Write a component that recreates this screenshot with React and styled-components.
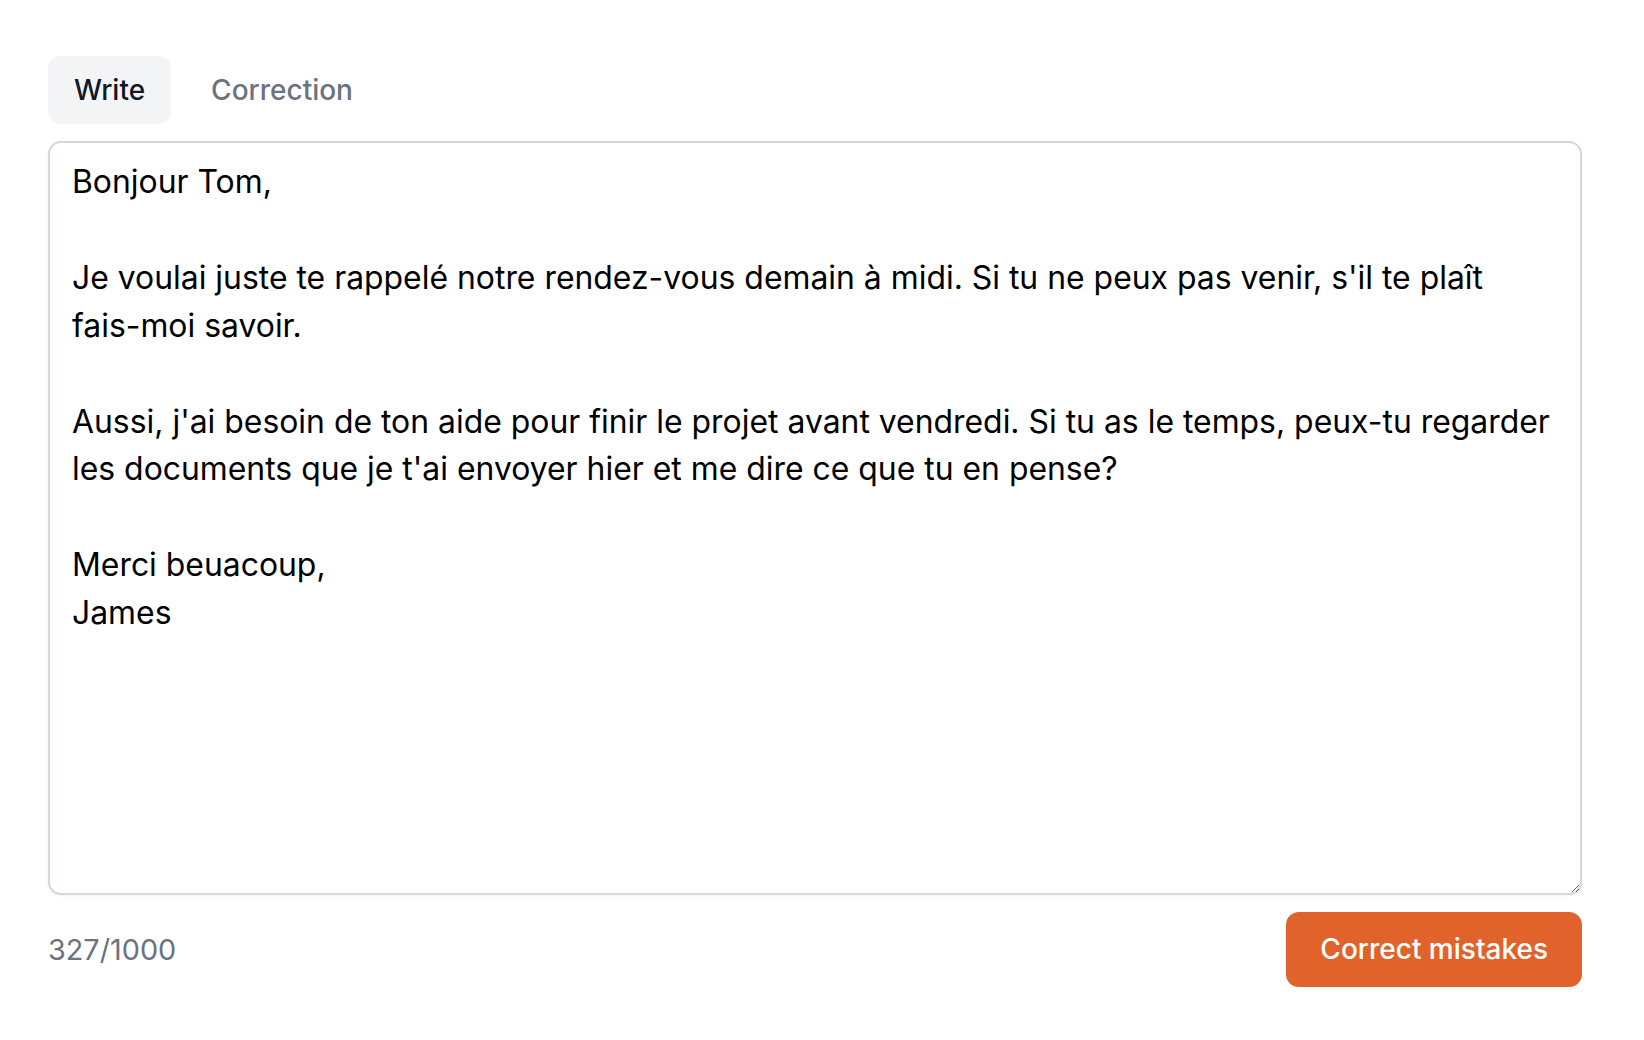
import React, { useState } from "react";
import styled, { createGlobalStyle } from "styled-components";

const GlobalStyle = createGlobalStyle`
  html, body {
    margin: 0;
    padding: 0;
    background: #ffffff;
    font-family: Inter, "Noto Sans", "Liberation Sans", sans-serif;
  }
  * { box-sizing: border-box; }
`;

const Page = styled.div`
  width: 1644px;
  padding: 56px 62px 0 48px;
  display: flex;
  flex-direction: column;
`;

const TabList = styled.div`
  display: flex;
  gap: 14px;
  margin-bottom: 17px;
`;

const Tab = styled.button`
  border: none;
  outline: none;
  cursor: pointer;
  font-family: Inter, "Noto Sans", sans-serif;
  font-size: 28px;
  font-weight: 500;
  line-height: 41px;
  height: 68px;
  padding: 0 26px;
  border-radius: 13px;
  background: ${(p) => (p.$active ? "#f3f4f6" : "transparent")};
  color: ${(p) => (p.$active ? "#111827" : "#6b7280")};
`;

const Editor = styled.textarea`
  display: block;
  width: 100%;
  height: 754px;
  margin: 0;
  padding: 15px 25px 17px 22px;
  border: 2px solid #d4d7dd;
  border-radius: 13px;
  box-shadow: 0 1px 3px rgba(0, 0, 0, 0.05);
  font-family: Inter, "Noto Sans", sans-serif;
  font-size: 31.9px;
  line-height: 47.9px;
  color: #000000;
  background: #ffffff;
  resize: vertical;
  outline: none;
`;

const Footer = styled.div`
  display: flex;
  align-items: center;
  justify-content: space-between;
  margin-top: 17px;
`;

const Counter = styled.span`
  font-family: Inter, "Noto Sans", sans-serif;
  font-size: 28.8px;
  line-height: 41px;
  color: #6b7280;
`;

const ActionButton = styled.button`
  border: none;
  cursor: pointer;
  height: 75px;
  padding: 0 34px;
  border-radius: 13px;
  background: #e0632b;
  color: #ffffff;
  font-family: Inter, "Noto Sans", sans-serif;
  font-size: 28px;
  font-weight: 500;
  line-height: 41px;
  box-shadow: 0 1px 3px rgba(0, 0, 0, 0.08);
`;

const TEXT = `Bonjour Tom,

Je voulai juste te rappelé notre rendez-vous demain à midi. Si tu ne peux pas venir, s'il te plaît fais-moi savoir.

Aussi, j'ai besoin de ton aide pour finir le projet avant vendredi. Si tu as le temps, peux-tu regarder les documents que je t'ai envoyer hier et me dire ce que tu en pense?

Merci beuacoup,
James`;

export default function App() {
  const [tab, setTab] = useState("write");
  const [text, setText] = useState(TEXT);
  return (
    <>
      <GlobalStyle />
      <Page>
        <TabList>
          <Tab $active={tab === "write"} onClick={() => setTab("write")}>
            Write
          </Tab>
          <Tab $active={tab === "correction"} onClick={() => setTab("correction")}>
            Correction
          </Tab>
        </TabList>
        <Editor value={text} onChange={(e) => setText(e.target.value)} spellCheck={false} />
        <Footer>
          <Counter>{text.length}/1000</Counter>
          <ActionButton>Correct mistakes</ActionButton>
        </Footer>
      </Page>
    </>
  );
}
